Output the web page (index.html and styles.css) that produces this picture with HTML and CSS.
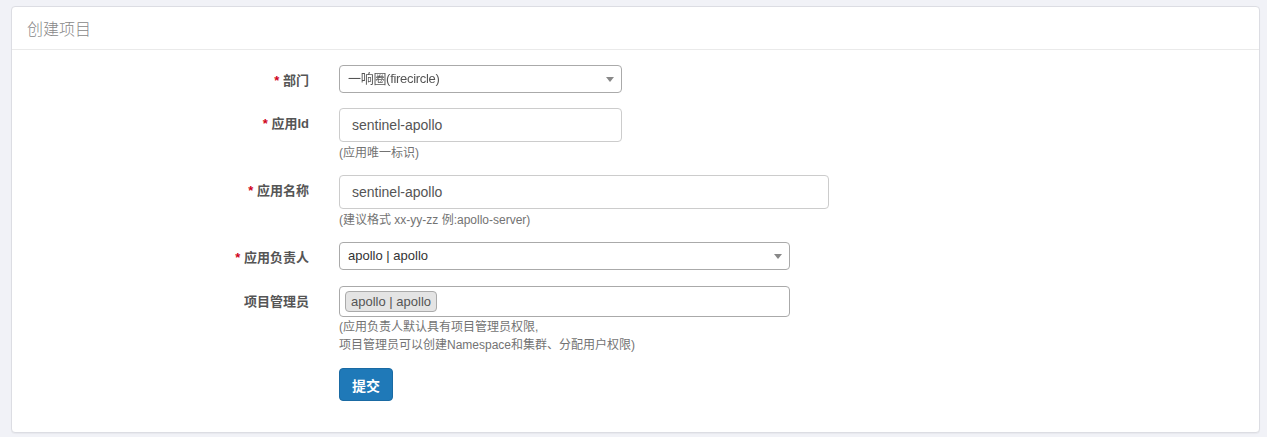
FILE: index.html
```html
<!DOCTYPE html>
<html lang="zh">
<head>
<meta charset="utf-8">
<title>创建项目</title>
<link rel="stylesheet" href="styles.css">
</head>
<body>
<div class="panel">
  <div class="panel-heading">创建项目</div>
  <div class="panel-body">
    <div class="row mb15">
      <label class="label"><span class="req">*</span> 部门</label>
      <div class="field">
        <div class="select w282"><span class="smudge">一响圈(firecircle)</span><span class="caret"></span></div>
      </div>
    </div>
    <div class="row">
      <label class="label"><span class="req">*</span> 应用Id</label>
      <div class="field">
        <div class="input w282">sentinel-apollo</div>
        <div class="help">(应用唯一标识)</div>
      </div>
    </div>
    <div class="row">
      <label class="label"><span class="req">*</span> 应用名称</label>
      <div class="field">
        <div class="input w489">sentinel-apollo</div>
        <div class="help">(建议格式 xx-yy-zz 例:apollo-server)</div>
      </div>
    </div>
    <div class="row">
      <label class="label"><span class="req">*</span> 应用负责人</label>
      <div class="field">
        <div class="select sel2 w450"><span class="val">apollo | apollo</span><span class="caret"></span></div>
      </div>
    </div>
    <div class="row mb15">
      <label class="label">项目管理员</label>
      <div class="field">
        <div class="multi w450"><span class="tag">apollo | apollo</span></div>
        <div class="help help2">(应用负责人默认具有项目管理员权限,<br>项目管理员可以创建Namespace和集群、分配用户权限)</div>
      </div>
    </div>
    <div class="row">
      <div class="label"></div>
      <div class="field"><button class="btn">提交</button></div>
    </div>
  </div>
</div>
</body>
</html>
```
FILE: styles.css
```css
* { box-sizing: border-box; }
html, body { margin: 0; padding: 0; }
body {
  background: #f1f2f7;
  font-family: "Liberation Sans", "Noto Sans CJK SC", sans-serif;
  color: #333;
  height: 437px;
  overflow: hidden;
  padding: 6px 7px 0 11px;
}
.panel {
  background: #fff;
  border: 1px solid #dcdde3;
  border-radius: 4px;
  height: 427px;
  box-shadow: 0 1px 1px rgba(0,0,0,0.04);
}
.panel-heading {
  height: 43px;
  line-height: 43px;
  padding: 0 15px;
  border-bottom: 1px solid #eaeaea;
  font-size: 16px;
  color: #888;
  font-family: "Noto Sans CJK SC", sans-serif;
  font-weight: 300;
}
.panel-body {
  padding-top: 15px;
}
.row {
  display: flex;
  align-items: flex-start;
  margin-bottom: 16px;
}
.row.mb15 { margin-bottom: 15px; }
.label {
  width: 297px;
  flex: none;
  text-align: right;
  font-size: 13px;
  font-weight: bold;
  color: #555;
  font-family: "Liberation Sans", "Noto Sans CJK SC", sans-serif;
  padding-top: 7px;
  line-height: 17px;
}
.req { color: #d0021b; }
.field {
  margin-left: 30px;
}
.w282 { width: 283px; }
.w489 { width: 490px; }
.w450 { width: 451px; }
.select {
  height: 28px;
  border: 1px solid #aaa;
  border-radius: 4px;
  position: relative;
  font-size: 13px;
  line-height: 26px;
  padding-left: 8px;
  color: #444;
}
.smudge {
  color: #555;
  filter: blur(0.5px);
  letter-spacing: -0.3px;
}
.caret {
  position: absolute;
  right: 7px;
  top: 11px;
  width: 0;
  height: 0;
  border-left: 4px solid transparent;
  border-right: 4px solid transparent;
  border-top: 5px solid #888;
}
.sel2 .val { color: #333; }
.input {
  height: 34px;
  border: 1px solid #ccc;
  border-radius: 4px;
  padding: 0 12px;
  font-size: 14px;
  line-height: 32px;
  color: #555;
}
.help {
  font-size: 12px;
  color: #737373;
  line-height: 17px;
  margin-top: 3px;
  margin-bottom: -3px;
  font-family: "Liberation Sans", "Noto Sans CJK SC", sans-serif;
}
.help2 {
  line-height: 18px;
  margin-top: 1px;
  margin-bottom: -1px;
}
.multi {
  height: 31px;
  border: 1px solid #aaa;
  border-radius: 4px;
  padding: 4px 5px;
}
.tag {
  display: inline-block;
  height: 21px;
  line-height: 19px;
  padding: 0 5px;
  font-size: 13px;
  color: #555;
  background: #e4e4e4;
  border: 1px solid #aaa;
  border-radius: 4px;
}
.btn {
  width: 54px;
  height: 33px;
  background: #1f79b8;
  border: 1px solid #1a6aa3;
  border-radius: 4px;
  color: #fff;
  font-size: 14px;
  font-weight: bold;
  font-family: "Noto Sans CJK SC", sans-serif;
  padding: 0;
}
```
